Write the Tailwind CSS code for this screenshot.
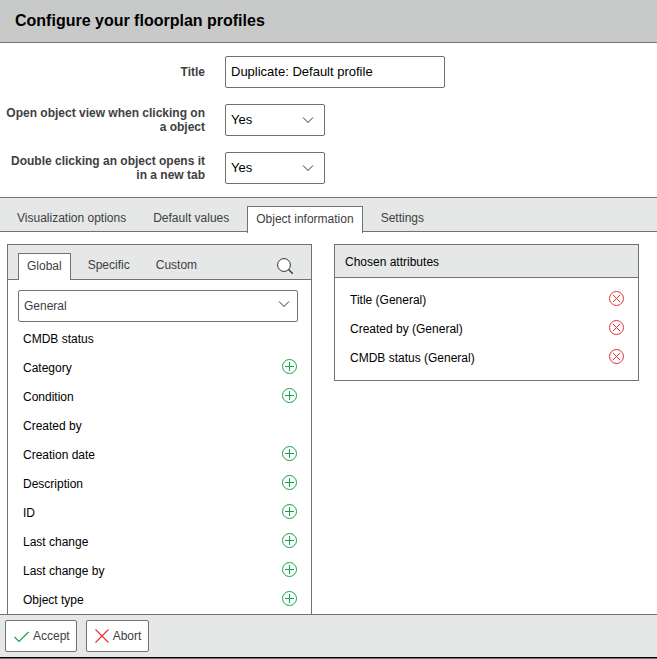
<!DOCTYPE html>
<html lang="en">
<head>
  <meta charset="UTF-8">
  <meta name="viewport" content="width=device-width, initial-scale=1.0">
  <title>Configure your floorplan profiles</title>
  <script src="https://cdn.jsdelivr.net/npm/@tailwindcss/browser@4"></script>
</head>
<body class="flex h-screen flex-col overflow-hidden bg-white font-['Liberation_Sans',Arial,sans-serif] text-xs text-black">

  <!-- shared icons -->
  <svg class="hidden">
    <symbol id="icon-add" viewBox="0 0 15 15"><circle cx="7.5" cy="7.5" r="7"/><path d="M7.5 3v9M3 7.5h9"/></symbol>
    <symbol id="icon-remove" viewBox="0 0 15 15"><circle cx="7.5" cy="7.5" r="7"/><path d="M4 4l7 7M11 4l-7 7"/></symbol>
    <symbol id="icon-chevron" viewBox="0 0 12 8"><path d="M1 1.5l5 5 5-5"/></symbol>
  </svg>

  <header class="border-b border-[#707372] bg-[#c8cac9] px-[15px] py-[9px]">
    <h1 class="text-base font-bold">Configure your floorplan profiles</h1>
  </header>

  <form id="profile-form" class="space-y-4 py-[13px]">
    <div class="flex items-center gap-5">
      <label for="title" class="w-[205px] text-right leading-[14px] font-bold text-[#404040]">Title</label>
      <input type="text" id="title" value="Duplicate: Default profile" class="h-8 w-[220px] rounded-xs border border-[#707372] bg-white px-[5px] pb-px text-[13px]">
    </div>
    <div class="flex items-center gap-5">
      <label for="open-view" class="w-[205px] text-right leading-[14px] font-bold text-[#404040]">Open object view when clicking on a object</label>
      <div class="relative">
        <select id="open-view" class="h-8 w-[100px] appearance-none rounded-xs border border-[#707372] bg-white px-[5px] text-[13px]">
          <option>Yes</option>
          <option>No</option>
        </select>
        <svg class="pointer-events-none absolute top-3 right-[11px] h-2 w-3 fill-none stroke-[#303030]"><use href="#icon-chevron"/></svg>
      </div>
    </div>
    <div class="flex items-center gap-5">
      <label for="new-tab" class="w-[205px] text-right leading-[14px] font-bold text-[#404040]">Double clicking an object opens it in a new tab</label>
      <div class="relative">
        <select id="new-tab" class="h-8 w-[100px] appearance-none rounded-xs border border-[#707372] bg-white px-[5px] text-[13px]">
          <option>Yes</option>
          <option>No</option>
        </select>
        <svg class="pointer-events-none absolute top-3 right-[11px] h-2 w-3 fill-none stroke-[#303030]"><use href="#icon-chevron"/></svg>
      </div>
    </div>
  </form>

  <nav class="flex items-end gap-[9px] border-y border-[#707372] bg-[#e5e8e6] pt-2 pl-2 text-[#404040]">
    <a href="#options" class="px-[9px] pt-1 pb-[5px]">Visualization options</a>
    <a href="#defaults" class="px-[9px] pt-1 pb-[5px]">Default values</a>
    <a href="#information" class="-mb-[2px] border border-b-0 border-[#707372] bg-white px-2 pt-1 pb-[6px]">Object information</a>
    <a href="#settings" class="px-[9px] pt-1 pb-[5px]">Settings</a>
  </nav>

  <main class="grid min-h-0 flex-1 grid-cols-2 items-start gap-[22px] overflow-hidden pt-3 pr-[18px] pl-[7px]">
    <section class="border border-[#707372]">
      <div class="flex items-end gap-2 border-b border-[#707372] bg-[#e5e8e6] pt-2 pr-[18px] pl-[10px] text-[#404040]">
        <a href="#global" class="-mb-px border border-b-0 border-[#707372] bg-white px-2 pt-1 pb-[6px]">Global</a>
        <a href="#specific" class="px-[9px] pt-1 pb-[6px]">Specific</a>
        <a href="#custom" class="px-[9px] pt-1 pb-[6px]">Custom</a>
        <button type="button" aria-label="Search" class="mb-[5px] ml-auto">
          <svg viewBox="0 0 16 16" class="h-4 w-4 fill-none stroke-[#303030]"><circle cx="7" cy="7" r="6.4" class="fill-white"/><path d="M11.5 11.5l4.2 4.2" stroke-width="1.3"/></svg>
        </button>
      </div>
      <div class="relative mt-[10px] mr-[13px] ml-[10px]">
        <select aria-label="Category" class="block h-8 w-full appearance-none rounded-xs border border-[#707372] bg-white px-[5px] text-[#404040]">
          <option>General</option>
        </select>
        <svg class="pointer-events-none absolute top-[10px] right-2 h-2 w-3 fill-none stroke-[#303030]"><use href="#icon-chevron"/></svg>
      </div>
      <ul id="attributes" class="pt-[2px] pr-[14px] pl-[15px]"></ul>
    </section>

    <section class="border border-[#707372]">
      <h2 class="border-b border-[#707372] bg-[#e5e8e6] px-[10px] pt-[9px] pb-[7px]">Chosen attributes</h2>
      <ul id="chosen" class="pt-[7px] pr-[14px] pb-2 pl-[15px]"></ul>
    </section>
  </main>

  <footer class="border-t border-[#707372] bg-[#e5e8e6]">
    <div class="flex gap-[9px] p-[5px] text-[#404040]">
      <button type="submit" form="profile-form" class="flex h-8 items-center gap-1 rounded-xs border border-[#707372] bg-white pr-[6px] pl-2">
        <svg viewBox="0 0 15 14" class="h-[14px] w-[15px] fill-none stroke-[#16a34a] stroke-[1.2]"><path d="M.5 8l4.5 4.5L14.5 3"/></svg>
        Accept
      </button>
      <button type="button" class="flex h-8 items-center gap-1 rounded-xs border border-[#707372] bg-white pr-[7px] pl-2">
        <svg viewBox="0 0 14 14" class="h-[14px] w-[14px] fill-none stroke-[#e53238] stroke-[1.2]"><path d="M.5.5l13 13M13.5.5l-13 13"/></svg>
        Abort
      </button>
    </div>
    <div class="h-[2px] border-t border-black bg-[#707372]"></div>
  </footer>

  <script>
    const attributes = [
      ['CMDB status', false],
      ['Category', true],
      ['Condition', true],
      ['Created by', false],
      ['Creation date', true],
      ['Description', true],
      ['ID', true],
      ['Last change', true],
      ['Last change by', true],
      ['Object type', true]
    ];
    const chosen = ['Title (General)', 'Created by (General)', 'CMDB status (General)'];

    // attributes that are already chosen get no add button
    document.getElementById('attributes').innerHTML = attributes.map(([name, canAdd]) => `
      <li class="flex h-[29px] items-start justify-between pt-[6px]">
        <span class="leading-[18px]">${name}</span>
        ${canAdd ? `<button type="button" aria-label="Add ${name}"><svg class="h-[15px] w-[15px] fill-none stroke-[#16a34a]"><use href="#icon-add"/></svg></button>` : ''}
      </li>`).join('');

    document.getElementById('chosen').innerHTML = chosen.map(name => `
      <li class="flex h-[29px] items-start justify-between pt-[6px]">
        <span class="leading-[18px]">${name}</span>
        <button type="button" aria-label="Remove ${name}"><svg class="h-[15px] w-[15px] fill-none stroke-[#e53238]"><use href="#icon-remove"/></svg></button>
      </li>`).join('');
  </script>

</body>
</html>
